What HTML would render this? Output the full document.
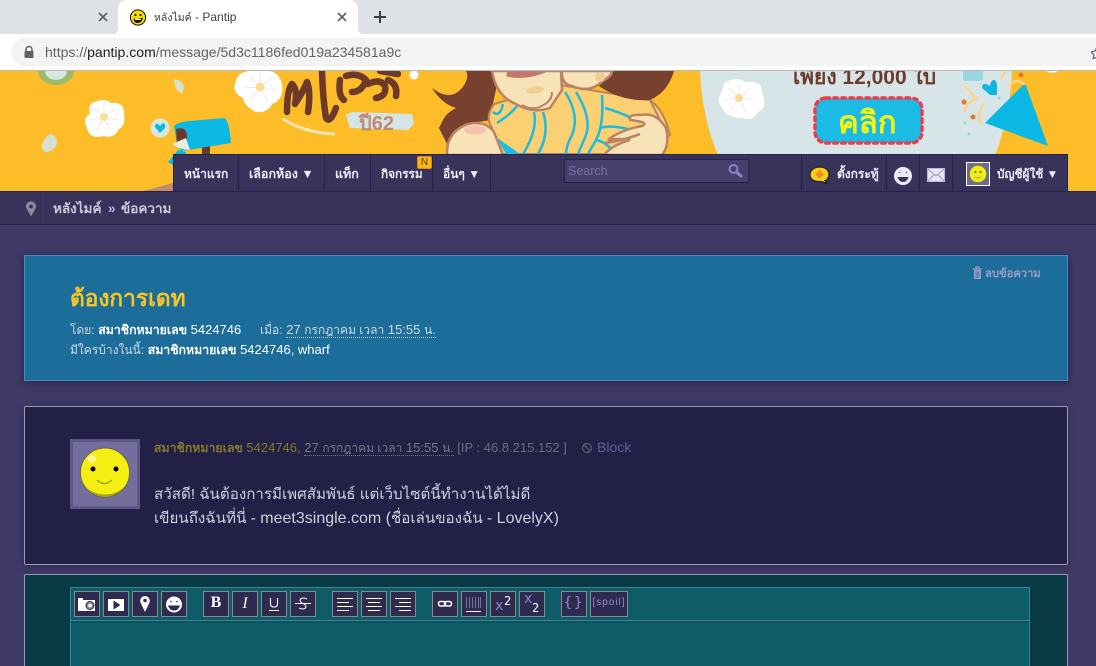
<!DOCTYPE html>
<html lang="th"><head><meta charset="utf-8"><title>หลังไมค์ - Pantip</title>
<style>
html,body{margin:0;padding:0;width:1096px;height:666px;overflow:hidden;background:#3f3a66;font-family:"Liberation Sans","Noto Sans CJK SC",sans-serif;}
#p{position:relative;width:1096px;height:666px;overflow:hidden;background:#3f3a66;}
.a{position:absolute;white-space:nowrap;}
.sep{position:absolute;top:155px;width:1px;height:36px;background:#25234a;}
.nav{position:absolute;top:164px;font-size:12px;font-weight:bold;color:#ecebf7;line-height:20px;white-space:nowrap;}
.btn{position:absolute;top:591px;width:24px;height:24px;border:1px solid #8a8a8a;background:#2f2b50;}
.btn svg{display:block;width:24px;height:24px;}
.d{border-bottom:1px dotted #bbb;}
.t{font-size:12px;}
.tb{font-size:12.3px;font-weight:bold;}
.mono{font-family:"DejaVu Sans Mono",monospace;position:absolute;}
</style></head><body><div id="p">

<!-- browser chrome -->
<div class="a" style="left:0;top:0;width:1096px;height:34px;background:#dee1e6;"></div>
<div class="a" style="left:0;top:34px;width:1096px;height:36px;background:#fff;"></div>
<div class="a" style="left:0;top:70px;width:1096px;height:1px;background:#b9b9b9;"></div>
<svg class="a" style="left:110px;top:0;" width="256" height="36"><path d="M0 36Q8 34 8 28V10Q8 0 18 0H238Q248 0 248 10V28Q248 34 256 36Z" fill="#fff"/></svg>
<svg class="a" style="left:96px;top:10px;" width="14" height="14"><path d="M3 3L11 11M11 3L3 11" stroke="#5f6368" stroke-width="1.700"/></svg>
<svg class="a" style="left:335px;top:10px;" width="14" height="14"><path d="M3 3L11 11M11 3L3 11" stroke="#5f6368" stroke-width="1.700"/></svg>
<svg class="a" style="left:372px;top:9px;" width="16" height="16"><path d="M8 2V14M2 8H14" stroke="#3c4043" stroke-width="2"/></svg>
<svg class="a" style="left:129px;top:9px;" width="18" height="17"><circle cx="9" cy="8.500" r="7.600" fill="#f6dc00" stroke="#111" stroke-width="1"/><circle cx="6.500" cy="6" r="1.100" fill="#111"/><circle cx="11.500" cy="6" r="1.100" fill="#111"/><path d="M4.500 9.500Q9 11 14 8.500Q13 14 8.500 14Q5 14 4.500 9.500Z" fill="#111"/><path d="M6 10.500H12" stroke="#fff"/></svg>
<div class="a" style="left:154px;top:9px;font-size:12px;line-height:17px;color:#3c4043;"><span style="font-size:10.500px">หลังไมค์</span> - Pantip</div>
<div class="a" style="left:11px;top:38px;width:1100px;height:28px;border-radius:14px;background:#f1f3f4;"></div>
<svg class="a" style="left:23px;top:45px;" width="12" height="14"><path d="M3 6V4.500A3 3 0 0 1 9 4.500V6" fill="none" stroke="#5f6368" stroke-width="1.500"/><rect x="1.500" y="6" width="9" height="7" rx="1" fill="#5f6368"/></svg>
<div class="a" style="left:45px;top:44px;font-size:14.040px;line-height:17px;color:#5f6368;">https://<span style="color:#202124">pantip.com</span>/message/5d3c1186fed019a234581a9c</div>
<svg class="a" style="left:1091px;top:46px;" width="5" height="13"><path d="M6 1L8 5L12 6L9 9L10 13L6 11L2 13L3 9L0 6L4 5Z" fill="none" stroke="#5f6368" stroke-width="1.200"/></svg>

<!-- banner -->
<svg class="a" style="left:0;top:71px;" width="1096" height="120" viewBox="0 71 1096 120">
<rect x="0" y="71" width="1096" height="120" fill="#fdbd28"/>
<path d="M143 191L173 183V191Z" fill="#c58a6c"/>
<ellipse cx="56" cy="71" rx="18" ry="14" fill="#4fb89b" opacity=".55"/><ellipse cx="56" cy="71" rx="11" ry="9" fill="#d7e6df"/>
<path d="M50 134Q58 136 57 144Q53 152 45 152Q40 148 43 142Q46 136 50 134Z" fill="#d5e0cf"/>
<path d="M174 79Q183 80 184 88Q183 94 180 93Q174 88 174 79Z" fill="#d5e0cf"/>
<path d="M92 103Q104 97 111 103Q125 101 124 116Q126 125 119 129Q114 139 104 136Q90 140 87 128Q82 118 90 114Q88 106 92 103Z" fill="#fff"/><g stroke="#ddd" stroke-width=".6"><path d="M104 117L104 104M104 117L115 109M104 117L118 120M104 117L110 131M104 117L96 131M104 117L90 120M104 117L93 108"/></g><circle cx="104" cy="117" r="4" fill="#fbdc93"/>
<path d="M240 74Q252 68 266 71Q278 70 282 84Q284 100 272 104Q268 113 256 112Q244 106 243 98Q232 92 235 84Q236 78 240 74Z" fill="#fff"/><g stroke="#ddd" stroke-width=".6"><path d="M260 87L260 73M260 87L272 78M260 87L276 90M260 87L268 102M260 87L250 100M260 87L244 88M260 87L250 76"/></g><circle cx="260" cy="87" r="4.500" fill="#fbdc93"/>
<circle cx="414" cy="75" r="4.500" fill="#fff"/>
<circle cx="160" cy="128" r="9.500" fill="#d8e6e0"/><path d="M160 133L155 127Q155 123 158 124L160 126L163 123Q166 124 165 128Z" fill="#0bb8e4"/>
<path d="M178 150L168 162L182 171L186 152Z" fill="#0bb8e4"/>
<rect x="202" y="140" width="8" height="18" fill="#6d3a2a"/>
<path d="M174 126Q178 122 190 121L224 118Q229 119 231 143L182 151Q178 150 176 138Z" fill="#0bb8e4"/>
<path d="M176 129Q186 126 187 135V147L177 146Z" fill="#6d3a2a"/>
<path d="M172 144L186 138L190 150Q180 150 172 144Z" fill="#e8ecdf"/>
<!-- lettering -->
<g fill="none" stroke="#6d3a2a" stroke-width="6.500" stroke-linecap="round" stroke-linejoin="round">
<path d="M287 112Q287 90 292 84Q298 90 295 104Q303 92 307 82Q311 92 308 112"/>
<path d="M322 71Q323 100 326 118Q330 124 336 108"/>
<path d="M340 80Q338 96 344 100M346 76Q358 72 366 80Q362 92 352 92"/>
<path d="M368 84Q380 78 385 86Q387 96 376 98M388 80Q398 84 396 96"/>
<path d="M380 71L398 74"/>
</g>
<path d="M283 119Q305 133 335 134" fill="none" stroke="#fbe6b4" stroke-width="3"/>
<path d="M346 115L352 112L412 114L414 124L408 130L350 128Z" fill="#d5e5e7"/>
<text x="359" y="130" font-size="20" font-weight="bold" fill="#be8c70" font-family="Liberation Sans,sans-serif">ปี62</text>
<!-- pale disc -->
<path d="M700 71Q702 118 718 155H995Q1010 118 1012 71Z" fill="#d8e5e8"/>
<!-- left hair -->
<path d="M432 88Q450 102 462 88Q470 78 466 71H500L492 108L504 118L478 122L448 146L439 128L444 118Q448 112 456 108Q442 104 432 88Z" fill="#77402f"/>
<!-- body -->
<path d="M494 104Q486 115 490 124Q494 130 496 145L500 154H640L670 135Q664 110 650 100L560 85Z" fill="#fbd072" stroke="#b98364" stroke-width="2"/>
<path d="M496 137L506 154H520Z" fill="#1dbbe0"/>
<g fill="none" stroke="#1dbbe0" stroke-width="2.500">
<path d="M493 112Q500 118 503 104M497 123Q510 115 517 106"/>
<path d="M534 112Q538 130 523 154M543 112Q550 134 538 154"/>
<path d="M565 92Q580 115 572 135Q566 146 566 154M576 92Q592 118 586 135L578 154"/>
<path d="M602 95Q604 125 596 140L588 154M605 108Q620 112 640 122M600 128Q612 124 640 132M596 140Q606 142 614 152"/>
</g>
<path d="M447 155Q446 132 468 124Q485 120 494 132L503 155Z" fill="#f8e3b8" stroke="#b98364" stroke-width="2.500"/>
<ellipse cx="475" cy="130" rx="11" ry="4.500" fill="#f5c3ae"/>
<path d="M604 71H674Q668 92 650 100Q620 102 596 84Z" fill="#77402f"/>
<path d="M650 100L662 124" stroke="#b98364" stroke-width="2"/>
<path d="M492 71Q496 96 516 104Q532 114 550 108L562 90L561 71Z" fill="#f8e3b8" stroke="#b98364" stroke-width="2.500"/>
<path d="M507 76Q528 80 547 71H508Z" fill="#c9727a" stroke="#b98364" stroke-width="1.500"/>
<ellipse cx="535" cy="90" rx="9" ry="3.500" fill="#f0cf92" transform="rotate(-8 535 90)"/>
<path d="M522 105Q534 112 545 104Q552 100 552 92" fill="none" stroke="#b98364" stroke-width="2"/>
<path d="M562 71Q561 84 572 86Q590 94 604 80Q612 76 612 71Z" fill="#f8e3b8" stroke="#b98364" stroke-width="2.500"/>
<ellipse cx="600" cy="77" rx="5" ry="5" fill="#edcf95"/>
<path d="M604 155Q612 145 630 140Q618 138 608 140Q620 130 642 126Q650 122 630 120Q628 114 642 115Q656 112 666 128Q670 145 662 155Z" fill="#f8e3b8" stroke="#b98364" stroke-width="2.500"/>
<path d="M605 143Q625 140 640 134" fill="none" stroke="#b98364" stroke-width="2.500"/>
<path d="M724 83Q736 76 745 82Q762 80 762 92Q768 108 758 112Q752 122 742 118Q726 118 721 106Q716 98 722 92Z" fill="#fff"/><g stroke="#ddd" stroke-width=".6"><path d="M739 98L739 84M739 98L750 88M739 98L755 100M739 98L746 112M739 98L730 110M739 98L724 100M739 98L729 88"/></g><circle cx="739" cy="98" r="4" fill="#fbdc93"/>
<text x="793" y="84" font-size="21" font-weight="bold" fill="#6b3b2b" font-family="Liberation Sans,Noto Sans CJK SC,sans-serif">เพียง 12,000 ใบ</text>
<rect x="815" y="98" width="107" height="45" rx="11" fill="#1bbbe5" stroke="#ef3b49" stroke-width="3.500" stroke-dasharray="3.500 4.500" stroke-linecap="round"/>
<text x="838" y="133" font-size="31" font-weight="bold" fill="#f4f611" font-family="Liberation Sans,Noto Sans CJK SC,sans-serif">คลิก</text>
<path d="M963 71H983V78Q983 81 980 81H966Q963 81 963 78Z" fill="#9ad6e2"/>
<path d="M990 95L982 88Q982 83 986 84L990 86Q991 79 995 80L997 84V95Z" fill="#0bb8e4"/>
<path d="M1025 83L985 123L1048 146Z" fill="#0bb8e4"/>
<g fill="none" stroke="#fbd68a" stroke-width="2.500" stroke-linecap="round"><path d="M965 87Q972 92 974 97"/><path d="M965 112Q964 102 978 99"/><path d="M981 124Q976 116 983 105"/><path d="M1010 85Q1016 78 1024 84"/><path d="M1002 78L1005 71"/></g>
<g fill="#e4752a"><circle cx="964" cy="102" r="2.500"/><circle cx="973" cy="117" r="2.500"/><circle cx="1021" cy="75" r="2.500"/></g>
<g fill="#8fd6df"><circle cx="999" cy="98" r="1.500"/><circle cx="965" cy="123" r="1.500"/><circle cx="969" cy="134" r="1.500"/></g>
<path d="M1046 71Q1054 74 1058 71" fill="#fff" stroke="#ddd"/>
</svg>

<!-- navbar -->
<div class="a" style="left:173px;top:154px;width:895px;height:37px;background:#38335a;border-top:1px solid #25234a;box-sizing:border-box;border-left:1px solid #25234a;border-right:1px solid #25234a;"></div>
<div class="sep" style="left:238px"></div><div class="sep" style="left:324px"></div><div class="sep" style="left:370px"></div><div class="sep" style="left:432px"></div><div class="sep" style="left:490px"></div><div class="sep" style="left:801px"></div><div class="sep" style="left:886px"></div><div class="sep" style="left:919px"></div><div class="sep" style="left:952px"></div>
<div class="nav" style="left:184px">หน้าแรก</div>
<div class="nav" style="left:249px;font-size:12.500px">เลือกห้อง ▼</div>
<div class="nav" style="left:335px;font-size:12.500px">แท็ก</div>
<div class="nav" style="left:381px;font-size:11.800px">กิจกรรม</div>
<div class="nav" style="left:443px">อื่นๆ ▼</div>
<div class="a" style="left:417px;top:156px;width:13px;height:11px;background:#fcb90f;border:1px solid #e8821a;border-radius:2px;font-size:10px;line-height:11px;text-align:center;color:#4a3a10;">N</div>
<div class="a" style="left:564px;top:159px;width:183px;height:22px;background:#45406e;border:1px solid #252348;"></div>
<div class="a" style="left:568px;top:163px;font-size:12.500px;line-height:16px;color:#77739f;">Search</div>
<svg class="a" style="left:727px;top:163px;" width="18" height="17"><circle cx="6.500" cy="6" r="4" fill="none" stroke="#8a84c4" stroke-width="2"/><path d="M9.500 9L15 14" stroke="#8a84c4" stroke-width="3"/></svg>
<svg class="a" style="left:809px;top:165px;" width="22" height="21"><path d="M10.500 2C17 2 20 5.500 20 9.500C20 13 18 15 16 15.500L18 18.500L12.500 16.500H9C4 16.500 1 13.500 1 9.500C1 5.500 5 2 10.500 2Z" fill="#f6cd1b" stroke="#222" stroke-width="1.200"/><path d="M10.500 5.500V13M6.700 9.200H14.300" stroke="#ef8a1d" stroke-width="3"/></svg>
<div class="nav" style="left:837px">ตั้งกระทู้</div>
<svg class="a" style="left:893px;top:166px;" width="20" height="20"><circle cx="10" cy="10" r="9" fill="#ecebf7"/><circle cx="6.500" cy="6.500" r=".9" fill="#6f6a96"/><circle cx="13.500" cy="6.500" r=".9" fill="#6f6a96"/><path d="M4.500 11H15.500Q14 16 10 16Q6 16 4.500 11Z" fill="#38335a"/></svg>
<svg class="a" style="left:927px;top:167px;" width="18" height="16"><rect x=".5" y="1.500" width="17" height="13" fill="#e5e5f3" stroke="#bdbbd9"/><path d="M1 2L9 9L17 2M1 14L7 7.500M17 14L11 7.500" fill="none" stroke="#9e9cc4"/></svg>
<div class="a" style="left:966px;top:162px;width:22px;height:22px;background:#6f6a96;border:1px solid #fff;"></div>
<svg class="a" style="left:969px;top:165px;" width="18" height="18"><circle cx="9" cy="9" r="8.500" fill="#f0ec17" stroke="#7a7a20" stroke-width=".5"/><circle cx="6.500" cy="7" r="1" fill="#555"/><circle cx="11.500" cy="7" r="1" fill="#555"/><path d="M6 12Q9 14 12 12" fill="none" stroke="#777" stroke-width=".7"/></svg>
<div class="nav" style="left:997px;font-size:11.800px">บัญชีผู้ใช้ ▼</div>

<!-- breadcrumb -->
<div class="a" style="left:0;top:191px;width:1096px;height:34px;background:#38335a;border-top:1px solid #25234a;border-bottom:1px solid #25234a;box-sizing:border-box;"></div>
<div class="a" style="left:43px;top:192px;width:1px;height:32px;background:#3e3960;"></div>
<svg class="a" style="left:25px;top:201px;" width="12" height="16"><path d="M6 15.500L1.500 7.500A5 5 0 1 1 10.500 7.500Z" fill="#8b8a97"/><circle cx="6" cy="5.500" r="1.900" fill="#38335a"/></svg>
<div class="a" style="left:53px;top:200px;font-size:13.500px;line-height:18px;font-weight:bold;color:#c9c8d9;">หลังไมค์</div>
<div class="a" style="left:108px;top:200px;font-size:13.500px;line-height:18px;font-weight:bold;color:#bdbce0;">»</div>
<div class="a" style="left:121px;top:200px;font-size:13.500px;line-height:18px;font-weight:bold;color:#c9c8d9;">ข้อความ</div>

<!-- topic panel -->
<div class="a" style="left:24px;top:255px;width:1044px;height:126px;box-sizing:border-box;background:#1c6d99;border:1px solid #3f8fc0;box-shadow:0 2px 8px rgba(20,18,50,.55);"></div>
<svg class="a" style="left:972px;top:266px;" width="11" height="14"><path d="M1 3H10M4 3V1H7V3" fill="none" stroke="#a09cc9" stroke-width="1.200"/><path d="M2 4H9V13H2Z" fill="#a09cc9"/><path d="M4 5.500V12M5.500 5.500V12M7 5.500V12" stroke="#1c6d99" stroke-width=".6"/></svg>
<div class="a" style="left:985px;top:266px;font-size:11.200px;line-height:17px;font-weight:bold;color:#9f9bca;">ลบข้อความ</div>
<div class="a" style="left:70px;top:283px;font-size:22.700px;line-height:30px;font-weight:bold;color:#f7c526;">ต้องการเดท</div>
<div class="a" style="left:70px;top:321px;font-size:13px;line-height:17px;color:#cfd9e4;"><span class="t">โดย:</span> <span style="color:#fff"><span class="tb">สมาชิกหมายเลข</span> 5424746</span></div>
<div class="a" style="left:260px;top:321px;font-size:13px;line-height:17px;color:#cfd9e4;"><span class="t">เมื่อ:</span> <span class="d">27 <span class="t">กรกฎาคม เวลา</span> 15:55 <span class="t">น.</span></span></div>
<div class="a" style="left:70px;top:341px;font-size:13px;line-height:17px;color:#cfd9e4;"><span class="t">มีใครบ้างในนี้:</span> <span style="color:#fff"><span class="tb">สมาชิกหมายเลข</span> 5424746, wharf</span></div>

<!-- post panel -->
<div class="a" style="left:24px;top:406px;width:1044px;height:159px;box-sizing:border-box;background:#222047;border:1px solid #9b99b1;border-radius:2px;box-shadow:0 2px 8px rgba(20,18,50,.4);"></div>
<div class="a" style="left:70px;top:439px;width:64px;height:64px;background:#736e9b;border:3px solid #5d5888;"></div>
<svg class="a" style="left:78px;top:446px;" width="54" height="54"><circle cx="27" cy="26.500" r="24.500" fill="#f4ee12" stroke="#555" stroke-width=".7"/><path d="M8 41Q17 51 27 51Q38 51 46 41Q38 48.500 27 48.500Q16 48.500 8 41Z" fill="#a8a115"/><ellipse cx="14" cy="13" rx="4" ry="3.500" fill="#fbf8a0"/><circle cx="15" cy="23" r="2.500" fill="#000"/><circle cx="38" cy="23" r="2.500" fill="#000"/><path d="M19 34Q26 41 34 34" fill="none" stroke="#8a8a20" stroke-width="1"/></svg>
<div class="a" style="left:154px;top:439px;font-size:13px;line-height:17px;color:#6b6b80;"><span style="color:#857a28"><span class="tb">สมาชิกหมายเลข</span> 5424746,</span> <span style="border-bottom:1px dotted #777;color:#777786;">27 <span class="t">กรกฎาคม เวลา</span> 15:55 <span class="t">น.</span></span> [IP : 46.8.215.152 ]</div>
<svg class="a" style="left:581px;top:442px;" width="12" height="12"><circle cx="6" cy="6" r="4.500" fill="none" stroke="#55546a" stroke-width="1.400"/><path d="M3 3L9 9" stroke="#55546a" stroke-width="1.400"/></svg>
<div class="a" style="left:597px;top:439px;font-size:14px;line-height:17px;color:#5f5d97;">Block</div>
<div class="a" style="left:154px;top:483px;font-size:15.150px;line-height:24px;color:#cfcfe0;">สวัสดี! ฉันต้องการมีเพศสัมพันธ์ แต่เว็บไซต์นี้ทำงานได้ไม่ดี<br>เขียนถึงฉันที่นี่ <span style="font-size:16px">- meet3single.com (</span>ชื่อเล่นของฉัน <span style="font-size:16px">- LovelyX)</span></div>

<!-- reply panel -->
<div class="a" style="left:24px;top:574px;width:1044px;height:100px;box-sizing:border-box;background:#0a3a46;border:1px solid #9b99b1;border-radius:2px;"></div>
<div class="a" style="left:70px;top:587px;width:960px;height:90px;box-sizing:border-box;background:#0e5c68;border:1px solid #338a96;"></div>
<div class="a" style="left:71px;top:620px;width:958px;height:1px;background:#338a96;"></div>
<div class="a" style="left:71px;top:621px;width:958px;height:2px;background:#12505f;"></div>

<div class="btn" style="left:74px"><svg viewBox="0 0 24 24"><path d="M3 8V6H8V8H20V19H3Z" fill="#fff"/><circle cx="15" cy="13.500" r="4" fill="#8a8a9a" stroke="#2f2b50" stroke-width="1"/><circle cx="15" cy="13.500" r="1.800" fill="#fff"/></svg></div>
<div class="btn" style="left:103px"><svg viewBox="0 0 24 24"><rect x="4" y="7" width="16" height="12" fill="#fff"/><path d="M9.500 8.500L16.500 13L9.500 17.500Z" fill="#2f2b50"/></svg></div>
<div class="btn" style="left:132px"><svg viewBox="0 0 24 24"><path d="M12 20L7.500 10.500A4.800 4.800 0 1 1 16.500 10.500Z" fill="#fff"/><circle cx="12" cy="8.500" r="1.800" fill="#2f2b50"/></svg></div>
<div class="btn" style="left:161px"><svg viewBox="0 0 24 24"><circle cx="12" cy="12.500" r="8" fill="#fff"/><circle cx="9" cy="9.500" r=".8" fill="#2f2b50"/><circle cx="15" cy="9.500" r=".8" fill="#2f2b50"/><path d="M6 13.500H18Q16.500 18.500 12 18.500Q7.500 18.500 6 13.500Z" fill="#2f2b50"/></svg></div>

<div class="btn" style="left:203px"><div style="font:bold 16px/22px 'Liberation Serif',serif;color:#fff;text-align:center;">B</div></div>
<div class="btn" style="left:232px"><div style="font:italic 16px/24px 'Liberation Serif',serif;color:#fff;text-align:center;">I</div></div>
<div class="btn" style="left:261px"><svg viewBox="0 0 24 24"><path d="M8.500 6V12Q8.500 15 12 15Q15.500 15 15.500 12V6" fill="none" stroke="#fff" stroke-width="1.100"/><path d="M7 18.500H17" stroke="#fff" stroke-width="1"/></svg></div>
<div class="btn" style="left:290px"><svg viewBox="0 0 24 24"><path d="M16 7Q12 5 9.500 7Q8 10 12 11.500Q16 13 14.500 16Q12 18 8 16" fill="none" stroke="#fff" stroke-width="1.100"/><path d="M4 11.500H20" stroke="#fff" stroke-width="1"/></svg></div>

<div class="btn" style="left:332px"><svg viewBox="0 0 24 24"><path d="M4 6.500H20M4 10.500H16M4 14.500H20M4 18.500H16" stroke="#fff"/></svg></div>
<div class="btn" style="left:361px"><svg viewBox="0 0 24 24"><path d="M4 6.500H20M6 10.500H18M4 14.500H20M6 18.500H18" stroke="#fff"/></svg></div>
<div class="btn" style="left:390px"><svg viewBox="0 0 24 24"><path d="M4 6.500H20M8 10.500H20M4 14.500H20M8 18.500H20" stroke="#fff"/></svg></div>

<div class="btn" style="left:432px"><svg viewBox="0 0 24 24"><rect x="5.500" y="9.500" width="7" height="4.500" rx="2" fill="none" stroke="#fff" stroke-width="1.500"/><rect x="11.500" y="9.500" width="7" height="4.500" rx="2" fill="none" stroke="#fff" stroke-width="1.500"/></svg></div>
<div class="btn" style="left:461px"><svg viewBox="0 0 24 24"><path d="M4.500 5V16M7.500 5V16M10.500 5V16M13.500 5V16M16.500 5V16M18.500 5V16" stroke="#75719f" stroke-width="1"/><path d="M4 19.500H19" stroke="#fff" stroke-width="1"/></svg></div>
<div class="btn" style="left:490px"><div class="mono" style="left:4px;top:4px;font-size:14px;line-height:20px;color:#8f8bd0;">x</div><div class="mono" style="left:13px;top:1px;font-size:12px;line-height:16px;color:#fff;">2</div></div>
<div class="btn" style="left:519px"><div class="mono" style="left:4px;top:-3px;font-size:14px;line-height:20px;color:#8f8bd0;">x</div><div class="mono" style="left:12px;top:8px;font-size:12px;line-height:16px;color:#fff;">2</div></div>
<div class="btn" style="left:561px"><div style="font:14px/23px 'DejaVu Sans Mono',monospace;letter-spacing:2px;color:#8f8bd0;text-align:center;">{}</div></div>
<div class="btn" style="left:590px;width:36px"><div style="font:10px/22px 'Liberation Sans',sans-serif;letter-spacing:1px;color:#8f8bd0;text-align:center;">[spoil]</div></div>
</div></body></html>
